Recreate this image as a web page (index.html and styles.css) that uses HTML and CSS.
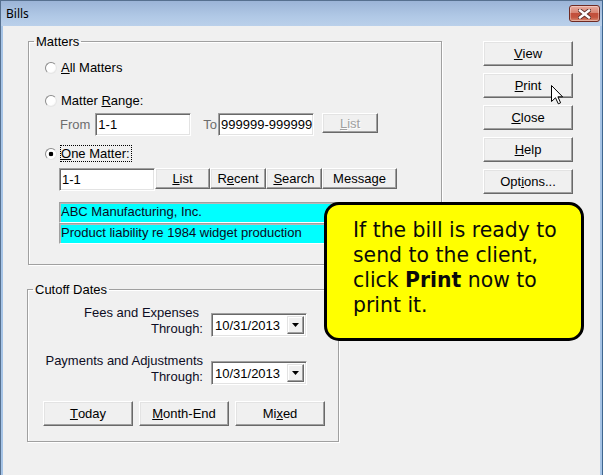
FILE: index.html
```html
<!DOCTYPE html>
<html>
<head>
<meta charset="utf-8">
<title>Bills</title>
<link rel="stylesheet" href="styles.css">
</head>
<body>
<div class="window">
  <div class="titlebar">
    <span class="title">Bills</span>
    <span class="close-btn">
      <svg width="13" height="10" viewBox="0 0 13 10">
        <path d="M2 1.5 L11 8.5 M11 1.5 L2 8.5" stroke="#5b2f29" stroke-width="4.2" stroke-linecap="square" fill="none"/>
        <path d="M2 1.5 L11 8.5 M11 1.5 L2 8.5" stroke="#ffffff" stroke-width="2.4" stroke-linecap="square" fill="none"/>
      </svg>
    </span>
  </div>
  <div class="client">
    <div class="left-col">
      <fieldset class="group matters">
        <legend>Matters</legend>
        <div class="radio-row r-all"><span class="radio"></span><span class="rlabel"><u>A</u>ll Matters</span></div>
        <div class="radio-row r-range"><span class="radio"></span><span class="rlabel">Matter <u>R</u>ange:</span></div>
        <div class="range-row">
          <span class="dis-label from">From</span>
          <span class="field">1-1</span>
          <span class="dis-label to">To</span>
          <span class="field">999999-999999</span>
          <span class="btn disabled r-list"><u>L</u>ist</span>
        </div>
        <div class="radio-row r-one"><span class="radio checked"></span><span class="rlabel focus"><u>O</u>ne Matter:</span></div>
        <div class="one-row">
          <span class="field">1-1</span>
          <span class="btn tb b-list"><u>L</u>ist</span>
          <span class="btn tb b-recent">R<u>e</u>cent</span>
          <span class="btn tb b-search"><u>S</u>earch</span>
          <span class="btn tb b-msg">Messa<u>g</u>e</span>
        </div>
        <div class="info">
          <div class="cyan">ABC Manufacturing, Inc.</div>
          <div class="cyan">Product liability re 1984 widget production</div>
        </div>
      </fieldset>

      <fieldset class="group cutoff">
        <legend>Cutoff Dates</legend>
        <div class="date-row first">
          <div class="date-label"><span class="l-fees">Fees and Expenses</span><br>Through:</div>
          <div class="combo">
            <span class="combo-text">10/31/2013</span>
            <span class="dd"><svg width="7" height="4" viewBox="0 0 7 4"><path d="M0 0 H7 L3.5 4 Z" fill="#000"/></svg></span>
          </div>
        </div>
        <div class="date-row second">
          <div class="date-label">Payments and Adjustments<br>Through:</div>
          <div class="combo">
            <span class="combo-text">10/31/2013</span>
            <span class="dd"><svg width="7" height="4" viewBox="0 0 7 4"><path d="M0 0 H7 L3.5 4 Z" fill="#000"/></svg></span>
          </div>
        </div>
        <div class="date-buttons">
          <span class="btn wide"><u>T</u>oday</span>
          <span class="btn wide"><u>M</u>onth-End</span>
          <span class="btn wide">Mi<u>x</u>ed</span>
        </div>
      </fieldset>
    </div>

    <div class="right-col">
      <span class="btn side"><u>V</u>iew</span>
      <span class="btn side"><u>P</u>rint</span>
      <span class="btn side"><u>C</u>lose</span>
      <span class="btn side"><u>H</u>elp</span>
      <span class="btn side">Opt<u>i</u>ons...</span>
    </div>
  </div>

  <svg class="cursor" width="13" height="20" viewBox="0 0 13 20">
    <path d="M0.5 0.5 L0.5 16.5 L4.5 12.8 L7.3 18.8 L9.6 17.8 L6.9 11.8 L11.6 11.8 Z" fill="#fff" stroke="#000" stroke-width="1" stroke-linejoin="miter"/>
  </svg>

  <div class="callout">If the bill is ready to send to the client, click <b>Print</b> now to print it.</div>
</div>
</body>
</html>
```

FILE: styles.css
```css
* { box-sizing: border-box; }

body {
  margin: 0;
  background: #f0f0f0;
  font-family: "Liberation Sans", Arial, sans-serif;
  font-size: 13px;
  color: #000;
}

u { text-decoration: underline; text-underline-offset: 1px; }

.window {
  position: relative;
  width: 603px;
  height: 475px;
  overflow: hidden;
  display: flex;
  flex-direction: column;
  background: #a6c4e6;
  border-top: 1px solid #56708f;
  border-left: 1px solid #56708f;
  border-right: 1px solid #3f6790;
}

.titlebar {
  flex: none;
  height: 25px;
  display: flex;
  justify-content: space-between;
  align-items: flex-start;
  background: linear-gradient(#9bb4d7, #b0c8e5 60%, #bad0ea);
}

.title {
  font-family: "Noto Sans", "DejaVu Sans", sans-serif;
  font-size: 12px;
  line-height: 16px;
  padding: 5px 0 0 5px;
  color: #000;
}

.close-btn {
  width: 31px;
  height: 17px;
  margin: 4px 2px 0 0;
  display: flex;
  align-items: center;
  justify-content: center;
  border: 1px solid #6f2a22;
  border-radius: 3px;
  background: linear-gradient(#e9aa9e, #d88573 45%, #c24f3b 50%, #c4553f 75%, #d98b73);
  box-shadow: inset 0 0 0 1px rgba(255, 255, 255, 0.35);
}

.client {
  flex: 1;
  margin: 0 2px;
  background: #f0f0f0;
  display: flex;
  padding: 8px 0 0 24px;
}

.left-col {
  flex: none;
  width: 415px;
  display: flex;
  flex-direction: column;
}

.right-col {
  flex: none;
  margin: 7px 0 0 41px;
  display: flex;
  flex-direction: column;
  gap: 7px;
}

/* group boxes */
.group {
  margin: 0;
  padding: 0;
  min-width: 0;
  border: 1px solid #a0a0a0;
  box-shadow: 1px 1px 0 #fff, inset 1px 1px 0 #fff;
}

.group legend {
  margin-left: 5px;
  padding: 0 2px;
  line-height: 15px;
  font-size: 13px;
}

.matters {
  width: 414px;
  margin-left: 1px;
  padding-bottom: 20px;
}

.cutoff {
  width: 312px;
  margin-top: 17px;
  padding-bottom: 15px;
}

/* radios */
.radio-row {
  display: flex;
  align-items: center;
  height: 17px;
  margin-left: 16px;
}

.r-all { margin-top: 10px; }
.r-range { margin-top: 16px; }
.r-one { margin-top: 9px; }

.radio {
  flex: none;
  width: 12px;
  height: 12px;
  border-radius: 50%;
  border: 1px solid;
  border-color: #8c8c8c #e6e6e6 #e6e6e6 #8c8c8c;
  background: radial-gradient(circle at 40% 40%, #ffffff 55%, #e4e4e4);
}

.radio.checked {
  background: radial-gradient(circle at 50% 50%, #000 0 2px, #fff 2.6px);
}

.rlabel {
  margin-left: 3px;
  border: 1px dotted transparent;
  line-height: 15px;
  padding: 0 1px 0 0;
}

.rlabel.focus { border-color: #000; }

/* fields */
.field {
  flex: none;
  width: 96px;
  height: 23px;
  background: #fff;
  border: 1px solid;
  border-color: #a0a0a0 #fff #fff #a0a0a0;
  box-shadow: inset 1px 1px 0 #696969, inset -1px -1px 0 #e3e3e3;
  padding-left: 2px;
  line-height: 21px;
  white-space: nowrap;
  overflow: hidden;
}

.range-row {
  display: flex;
  align-items: center;
  margin: 4px 0 0 31px;
  height: 23px;
}

.dis-label { color: #6d6d6d; }
.dis-label.from { margin-right: 5px; }
.dis-label.to { margin: 0 1px 0 12px; }

.one-row {
  display: flex;
  align-items: flex-start;
  margin: 6px 0 0 30px;
  height: 23px;
}

/* buttons */
.btn {
  flex: none;
  display: flex;
  align-items: center;
  justify-content: center;
  background: #f0f0f0;
  border: 1px solid;
  border-color: #fff #696969 #696969 #fff;
  box-shadow: inset -1px -1px 0 #a0a0a0, inset 1px 1px 0 #e3e3e3;
  white-space: nowrap;
}

.btn.disabled {
  color: #a0a0a0;
  text-shadow: 1px 1px 0 #fff;
}

.r-list {
  width: 56px;
  height: 20px;
  margin-left: 8px;
  align-self: flex-start;
}

.tb { height: 21px; }
.b-list { width: 55px; }
.b-recent { width: 56px; }
.b-search { width: 56px; }
.b-msg { width: 75px; }

.side { width: 90px; height: 25px; }
.wide { width: 90px; height: 25px; }

/* cyan info */
.info {
  margin: 11px 0 0 30px;
  width: 368px;
}

.cyan {
  height: 21px;
  background: #00ffff;
  border: 1px solid;
  border-color: #a0a0a0 #fff #fff #a0a0a0;
  box-shadow: inset 1px 1px 0 #b9b9b9;
  padding-left: 1px;
  line-height: 18px;
  color: #0a0a1e;
  white-space: nowrap;
  overflow: hidden;
}

/* cutoff dates */
.date-row {
  display: flex;
  align-items: flex-end;
  margin-left: 15px;
}

.date-row.first { margin-top: 8px; }
.date-row.second { margin-top: 16px; }

.date-label {
  width: 160px;
  margin-right: 8px;
  text-align: right;
  line-height: 16px;
  color: #0d0d24;
}

.l-fees { margin-right: 4px; }

.combo {
  width: 96px;
  height: 24px;
  display: flex;
  align-items: center;
  background: #fff;
  border: 1px solid;
  border-color: #a0a0a0 #fff #fff #a0a0a0;
  box-shadow: inset 1px 1px 0 #696969, inset -1px -1px 0 #e3e3e3;
  padding: 0 2px 0 3px;
}

.combo-text { flex: 1; }

.dd {
  width: 17px;
  height: 18px;
  display: flex;
  align-items: center;
  justify-content: center;
  background: #f0f0f0;
  border: 1px solid;
  border-color: #e3e3e3 #696969 #696969 #e3e3e3;
  box-shadow: inset -1px -1px 0 #a0a0a0, inset 1px 1px 0 #fff;
}

.date-buttons {
  display: flex;
  gap: 6px;
  margin: 16px 0 0 15px;
}

/* overlays */
.cursor {
  position: absolute;
  left: 550px;
  top: 84px;
}

.callout {
  position: absolute;
  left: 323px;
  top: 201px;
  width: 260px;
  height: 139px;
  background: #ffff00;
  border: 3px solid #000;
  border-radius: 15px;
  padding: 13px 10px 0 26px;
  font-family: "DejaVu Sans", Verdana, sans-serif;
  font-size: 20.4px;
  line-height: 25px;
  color: #0a0a0a;
}

.callout b { font-weight: bold; }
```
